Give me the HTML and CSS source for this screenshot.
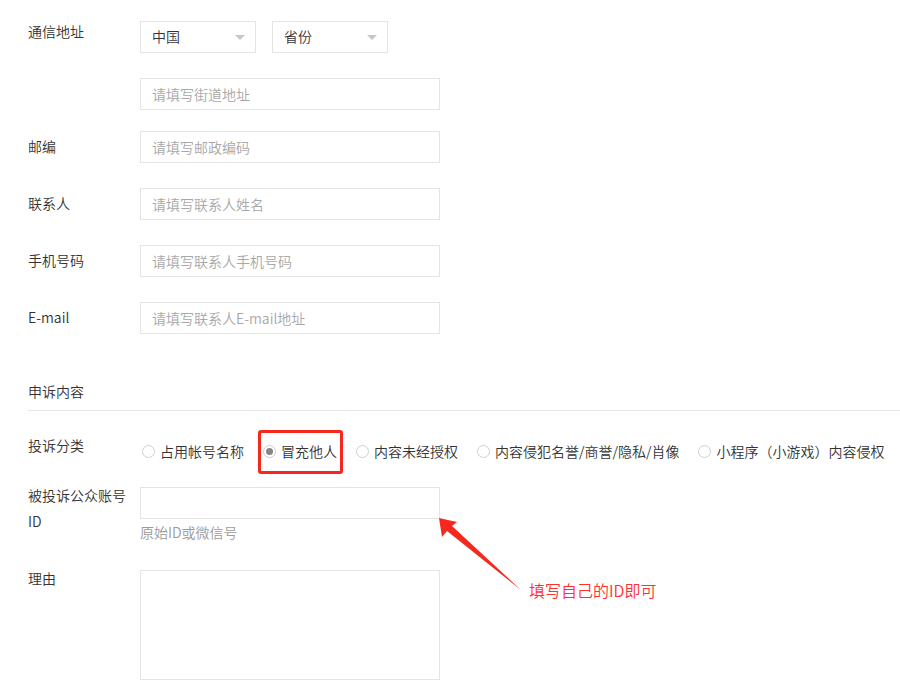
FILE: index.html
```html
<!DOCTYPE html>
<html lang="zh-CN">
<head>
<meta charset="utf-8">
<title>申诉</title>
<link rel="stylesheet" href="styles.css">
</head>
<body>
<div class="page">
  <div class="row row-address">
    <div class="label">通信地址</div>
    <div class="selects">
      <div class="select">中国<span class="caret"></span></div>
      <div class="select">省份<span class="caret"></span></div>
    </div>
  </div>
  <div class="row row-street">
    <div class="label"></div>
    <input class="input" type="text" placeholder="请填写街道地址">
  </div>
  <div class="row row-zip">
    <div class="label">邮编</div>
    <input class="input" type="text" placeholder="请填写邮政编码">
  </div>
  <div class="row row-std">
    <div class="label">联系人</div>
    <input class="input" type="text" placeholder="请填写联系人姓名">
  </div>
  <div class="row row-std">
    <div class="label">手机号码</div>
    <input class="input" type="text" placeholder="请填写联系人手机号码">
  </div>
  <div class="row row-std">
    <div class="label">E-mail</div>
    <input class="input" type="text" placeholder="请填写联系人E-mail地址">
  </div>

  <div class="section-title">申诉内容</div>

  <div class="row row-type">
    <div class="label">投诉分类</div>
    <div class="radios">
      <div class="radio"><span class="circle"></span>占用帐号名称</div>
      <div class="radio radio-marked"><span class="circle checked"></span>冒充他人</div>
      <div class="radio"><span class="circle"></span>内容未经授权</div>
      <div class="radio"><span class="circle"></span>内容侵犯名誉/商誉/隐私/肖像</div>
      <div class="radio"><span class="circle"></span>小程序（小游戏）内容侵权</div>
    </div>
  </div>

  <div class="row row-id">
    <div class="label label-two">被投诉公众账号<br>ID</div>
    <div class="field">
      <input class="input" type="text">
      <div class="hint">原始ID或微信号</div>
    </div>
  </div>

  <div class="row row-reason">
    <div class="label label-top">理由</div>
    <textarea class="textarea"></textarea>
  </div>

  <svg class="arrow" width="900" height="698" viewBox="0 0 900 698">
    <polygon points="439,518 457,522 452,526 521,590 447,531 442,537" fill="#f5281e"/>
  </svg>
  <div class="note">填写自己的ID即可</div>
</div>
</body>
</html>
```

FILE: styles.css
```css
* { box-sizing: border-box; }
html, body {
  margin: 0;
  padding: 0;
  background: #ffffff;
}
body {
  font-family: "Noto Sans CJK SC", "Noto Sans", sans-serif;
  font-size: 14px;
  font-weight: 350;
  color: #333333;
  width: 900px;
  height: 698px;
  overflow: hidden;
}
.page {
  position: relative;
  padding: 16px 0 0 28px;
  height: 698px;
}
.row {
  display: flex;
  align-items: flex-start;
}
.label {
  width: 112px;
  flex: none;
  line-height: 30px;
  color: #333333;
}
.row-street { margin-top: 25px; }
.row-zip { margin-top: 21px; }
.row-std { margin-top: 25px; }

.selects {
  display: flex;
  gap: 16px;
  margin-top: 5px;
}
.select {
  position: relative;
  width: 116px;
  height: 32px;
  border: 1px solid #e4e4e4;
  padding-left: 11px;
  line-height: 29px;
  color: #333333;
}
.caret {
  position: absolute;
  right: 10px;
  top: 13px;
  width: 0;
  height: 0;
  border-left: 5px solid transparent;
  border-right: 5px solid transparent;
  border-top: 5px solid #c6c6c6;
}

.input {
  width: 300px;
  height: 32px;
  border: 1px solid #e4e4e4;
  padding: 0 11px 1px;
  margin: 0;
  font-family: inherit;
  font-size: 14px;
  font-weight: 350;
  color: #333333;
  outline: none;
  background: #fff;
  display: block;
}
.input::placeholder { color: #a8a8a8; }

.section-title {
  margin-top: 47px;
  line-height: 20px;
  padding-bottom: 9px;
  border-bottom: 1px solid #e6e6e6;
  color: #333333;
}

.row-type { margin-top: 19px; }
.radios {
  display: flex;
  padding-left: 2px;
}
.radio {
  position: relative;
  display: flex;
  align-items: center;
  height: 44px;
  margin-right: 19px;
  white-space: nowrap;
  padding-bottom: 2px;
}
.radio:last-child { margin-right: 0; }
.circle {
  width: 13px;
  height: 13px;
  border: 1px solid #cfcfcf;
  border-radius: 50%;
  margin-right: 5px;
  position: relative;
  flex: none;
}
.circle.checked::after {
  content: "";
  position: absolute;
  left: 2px;
  top: 2px;
  width: 7px;
  height: 7px;
  border-radius: 50%;
  background: #858585;
}
.radio-marked::after {
  content: "";
  position: absolute;
  left: -5px;
  right: -6px;
  top: 0;
  bottom: 0;
  border: 3px solid #f5281e;
  border-radius: 3px;
}

.row-id { margin-top: 10px; }
.label-two { line-height: 26px; margin-top: -2px; }
.field { margin-top: 3px; }
.hint {
  margin-top: 3px;
  line-height: 20px;
  color: #9a9a9a;
}

.row-reason { margin-top: 28px; }
.label-top { line-height: 20px; margin-top: -2px; }
.textarea {
  width: 300px;
  height: 110px;
  border: 1px solid #e4e4e4;
  margin: 0;
  padding: 6px 11px;
  resize: none;
  font-family: inherit;
  font-size: 14px;
  outline: none;
  display: block;
}

.arrow {
  position: absolute;
  left: 0;
  top: 0;
  pointer-events: none;
}
.note {
  position: absolute;
  left: 529px;
  top: 580px;
  font-size: 16px;
  line-height: 20px;
  color: #ff3030;
  white-space: nowrap;
}
```
